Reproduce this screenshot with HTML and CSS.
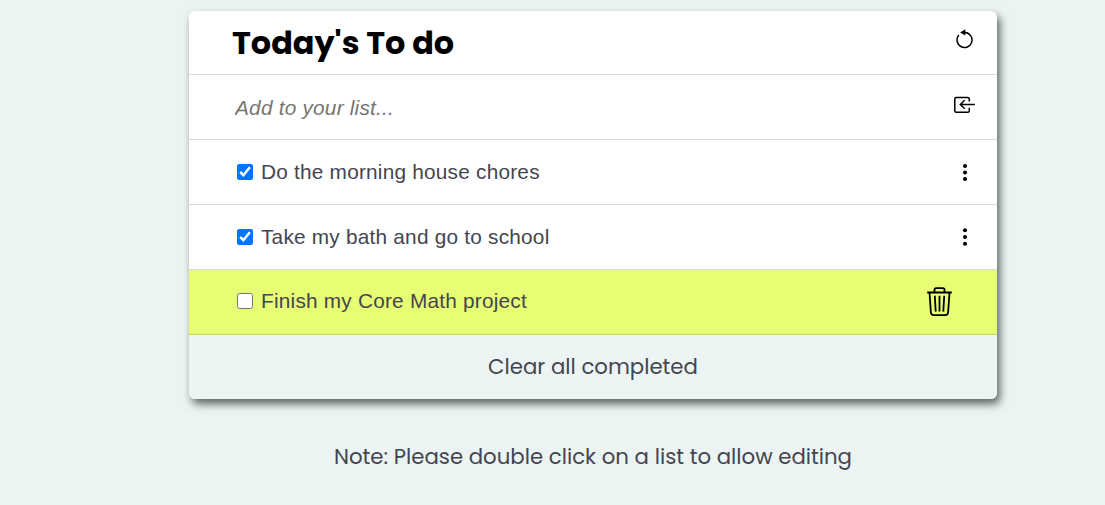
FILE: index.html
```html
<!DOCTYPE html>
<html lang="en">
<head>
<meta charset="utf-8">
<title>Today's To do</title>
<link rel="stylesheet" href="styles.css">
</head>
<body>
<main class="todo">
  <header class="row header">
    <h1 class="title"><span>Today's To do</span></h1>
    <svg class="icon refresh" viewBox="0 0 20 20" width="20" height="20"><path d="M3.9 6A7.5 7.5 0 1 0 10.2 3.5H8" fill="none" stroke="#000" stroke-width="1.5"/><path d="M5.1 3.4 10.3.2V6.5Z"/></svg>
  </header>
  <form class="row add">
    <input class="entry" type="text" placeholder="Add to your list...">
    <svg class="icon enter" viewBox="0 0 22 18" width="22" height="18" fill="none" stroke="#000" stroke-width="1.5"><path d="M15.3 5.5V3Q15.3 1.5 13.8 1.5H2.3Q.8 1.5.8 3V14.7Q.8 16.2 2.3 16.2H13.8Q15.3 16.2 15.3 14.7V11.7M20.8 8.5H6.3M10.7 4.2 6.3 8.5 10.7 12.8"/></svg>
  </form>
  <div class="row task">
    <label class="item"><input class="check" type="checkbox" checked><span>Do the morning house chores</span></label>
    <svg class="icon dots" viewBox="0 0 6 18" width="6" height="18"><circle cx="3" cy="3" r="2"/><circle cx="3" cy="9.5" r="2"/><circle cx="3" cy="16" r="2"/></svg>
  </div>
  <div class="row task">
    <label class="item"><input class="check" type="checkbox" checked><span>Take my bath and go to school</span></label>
    <svg class="icon dots" viewBox="0 0 6 18" width="6" height="18"><circle cx="3" cy="2.3" r="2"/><circle cx="3" cy="9" r="2"/><circle cx="3" cy="15.8" r="2"/></svg>
  </div>
  <div class="row task selected">
    <label class="item"><input class="check" type="checkbox"><span>Finish my Core Math project</span></label>
    <svg class="icon trash" viewBox="0 0 26 30" width="26" height="30" fill="none" stroke="#000" stroke-width="1.8"><path d="M.2 5.5H24.8M7.5 5.5V2.7Q7.5 1.1 9.1 1.1H15.9Q17.5 1.1 17.5 2.7V5.5M2.5 5.5 3.9 25.5Q4.2 28.1 6.6 28.1H18.4Q20.8 28.1 21.1 25.5L22.5 5.5M7.8 8.8 8.7 24.6M12.5 8.8V24.6M17.2 8.8 16.3 24.6"/></svg>
  </div>
  <button class="clear" type="button"><span>Clear all completed</span></button>
</main>
<p class="note"><span>Note: Please double click on a list to allow editing</span></p>
</body>
</html>
```
FILE: styles.css
```css
* { box-sizing: border-box; }
body {
  margin: 0;
  padding: 11px 0 0 189px;
  background: #ebf4f3;
  color: #45454f;
  font-family: Poppins, Inter, sans-serif;
}
.todo {
  width: 808px;
  height: 388px;
  border-radius: 6px;
  overflow: hidden;
  background: #fff;
  box-shadow: 3px 5px 9px rgba(0, 0, 0, 0.6);
}
.row {
  display: flex;
  align-items: center;
  justify-content: space-between;
  height: 65px;
  border-bottom: 1px solid rgba(0, 0, 0, 0.15);
  padding: 0 21px 0 43px;
}
.header { height: 64px; }
.title {
  margin: 0;
  color: #000;
  font-size: 31.9px;
  font-weight: 700;
  line-height: 40px;
}
.icon { display: block; flex: none; }
.refresh { margin-bottom: 8px; margin-right: 1px; }
.enter { margin-bottom: 4px; }
.entry {
  width: 500px;
  padding: 2px 2px 0 3px;
  border: 0;
  outline: 0;
  background: none;
  font: italic 20.8px "Liberation Sans", sans-serif;
  letter-spacing: 0.22px;
}
.entry::placeholder { color: #757575; }
.task { padding-left: 48px; padding-right: 29px; }
.item {
  display: flex;
  align-items: center;
  gap: 8px;
  font: 20.8px/24px "Liberation Sans", sans-serif;
  letter-spacing: 0.22px;
}
.check { width: 16px; height: 16px; margin: 0; }
.selected { background: #e7fd73; padding-right: 44px; }
.selected .item { margin-bottom: 2px; }
.clear {
  display: block;
  width: 100%;
  height: 64px;
  padding: 0 0 2px;
  border: 0;
  background: #ecf5f4;
  color: #45454f;
  font: 400 21.28px Poppins, Inter, sans-serif;
}
.note {
  width: 808px;
  margin: 42px 0 0;
  text-align: center;
  font-size: 21.28px;
  line-height: 32px;
}
```
